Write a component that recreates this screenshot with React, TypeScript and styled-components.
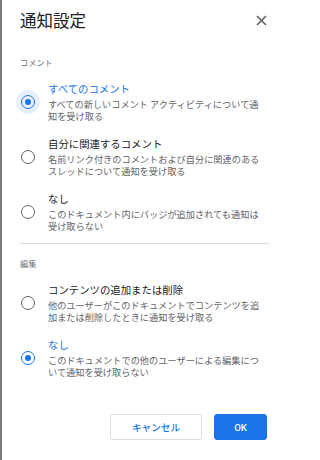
import React, { useState } from "react";
import styled, { createGlobalStyle } from "styled-components";

type OptionType = {
  id: string;
  title: string;
  lines: string[];
};

type SectionType = {
  id: string;
  label: string;
  options: OptionType[];
};

const sections: SectionType[] = [
  {
    id: "comment",
    label: "コメント",
    options: [
      {
        id: "all",
        title: "すべてのコメント",
        lines: ["すべての新しいコメント アクティビティについて通", "知を受け取る"],
      },
      {
        id: "mine",
        title: "自分に関連するコメント",
        lines: ["名前リンク付きのコメントおよび自分に関連のある", "スレッドについて通知を受け取る"],
      },
      {
        id: "none",
        title: "なし",
        lines: ["このドキュメント内にバッジが追加されても通知は", "受け取らない"],
      },
    ],
  },
  {
    id: "edit",
    label: "編集",
    options: [
      {
        id: "changes",
        title: "コンテンツの追加または削除",
        lines: ["他のユーザーがこのドキュメントでコンテンツを追", "加または削除したときに通知を受け取る"],
      },
      {
        id: "none",
        title: "なし",
        lines: ["このドキュメントでの他のユーザーによる編集につ", "いて通知を受け取らない"],
      },
    ],
  },
];

export default function App() {
  // 初期値はスクショ通り
  const [selected, setSelected] = useState<Record<string, string>>({
    comment: "all",
    edit: "none",
  });

  return (
    <>
      <GlobalStyle />
      <Dialog>
        <Header>
          <Title>通知設定</Title>
          <CloseButton aria-label="閉じる">
            <svg width="11" height="11" viewBox="0 0 11 11">
              <path d="M1 1 L10 10 M10 1 L1 10" stroke="#5f6368" strokeWidth="1.6" fill="none" />
            </svg>
          </CloseButton>
        </Header>

        {sections.map((section, sIndex) => (
          <React.Fragment key={section.id}>
            {sIndex > 0 && <Divider />}
            <SectionLabel $first={sIndex === 0}>{section.label}</SectionLabel>
            <OptionList>
              {section.options.map((option) => {
                const checked = selected[section.id] === option.id;
                return (
                  <OptionRow
                    key={option.id}
                    onClick={() => setSelected({ ...selected, [section.id]: option.id })}
                  >
                    <RadioHalo $focused={checked && section.id === "comment"}>
                      <RadioRing $checked={checked} />
                    </RadioHalo>
                    <OptionText>
                      <OptionTitle $checked={checked}>{option.title}</OptionTitle>
                      <OptionDesc>
                        {option.lines.map((line, i) => (
                          <span key={i}>{line}</span>
                        ))}
                      </OptionDesc>
                    </OptionText>
                  </OptionRow>
                );
              })}
            </OptionList>
          </React.Fragment>
        ))}

        <Footer>
          <Button>キャンセル</Button>
          <Button $primary>OK</Button>
        </Footer>
      </Dialog>
    </>
  );
}

const GlobalStyle = createGlobalStyle`
  html, body {
    margin: 0;
    padding: 0;
    background: #ffffff;
  }
  body {
    font-family: Roboto, "Noto Sans CJK JP", sans-serif;
  }
`;

const Dialog = styled.div`
  box-sizing: border-box;
  width: 289px;
  height: 460px;
  padding: 8px 20px 0 18px;
  border-left: 2px solid #7a7a7a;
  background: #ffffff;
  display: flex;
  flex-direction: column;
`;

const Header = styled.div`
  display: flex;
  align-items: center;
  justify-content: space-between;
  height: 24px;
`;

const Title = styled.h1`
  margin: 0;
  font-size: 16.5px;
  line-height: 24px;
  font-weight: 400;
  color: #202124;
  font-family: "Noto Sans CJK JP", sans-serif;
`;

const CloseButton = styled.button`
  width: 16px;
  height: 16px;
  padding: 0;
  border: none;
  background: transparent;
  display: flex;
  align-items: center;
  justify-content: center;
  cursor: pointer;
`;

const SectionLabel = styled.div<{ $first: boolean }>`
  margin-top: ${(p) => (p.$first ? "24px" : "13px")};
  font-size: 8.2px;
  line-height: 12px;
  color: #70757a;
  font-family: "Noto Sans CJK JP", sans-serif;
`;

const OptionList = styled.div`
  display: flex;
  flex-direction: column;
  gap: 15px;
  padding-top: 14px;
`;

const OptionRow = styled.label`
  display: flex;
  align-items: center;
  gap: 8px;
  cursor: pointer;
`;

const RadioHalo = styled.span<{ $focused: boolean }>`
  flex-shrink: 0;
  width: 24px;
  height: 24px;
  margin-left: -4px;
  border-radius: 50%;
  background: ${(p) => (p.$focused ? "#e8f0fe" : "transparent")};
  display: flex;
  align-items: center;
  justify-content: center;
`;

const RadioRing = styled.span<{ $checked: boolean }>`
  box-sizing: border-box;
  width: 14px;
  height: 14px;
  border-radius: 50%;
  border: 1.8px solid ${(p) => (p.$checked ? "#1a73e8" : "#5f6368")};
  display: flex;
  align-items: center;
  justify-content: center;

  &::after {
    content: "";
    width: 6px;
    height: 6px;
    border-radius: 50%;
    background: #1a73e8;
    display: ${(p) => (p.$checked ? "block" : "none")};
  }
`;

const OptionText = styled.div`
  display: flex;
  flex-direction: column;
  font-family: "Noto Sans CJK JP", sans-serif;
`;

const OptionTitle = styled.div<{ $checked: boolean }>`
  font-size: 10.4px;
  line-height: 14px;
  color: ${(p) => (p.$checked ? "#1a73e8" : "#202124")};
`;

const OptionDesc = styled.div`
  margin-top: 3px;
  font-size: 9.2px;
  line-height: 11.5px;
  color: #5f6368;
  white-space: nowrap;

  span {
    display: block;
  }
`;

const Divider = styled.hr`
  margin: 11px 0 0 0;
  border: none;
  height: 1px;
  background: #dadce0;
`;

const Footer = styled.div`
  display: flex;
  justify-content: flex-end;
  gap: 12px;
  margin-top: 36px;
  padding-right: 2px;
`;

const Button = styled.button<{ $primary?: boolean }>`
  box-sizing: border-box;
  height: 26px;
  width: ${(p) => (p.$primary ? "53px" : "92px")};
  border-radius: 3px;
  border: 1px solid ${(p) => (p.$primary ? "#1a73e8" : "#dadce0")};
  background: ${(p) => (p.$primary ? "#1a73e8" : "#ffffff")};
  color: ${(p) => (p.$primary ? "#ffffff" : "#1a73e8")};
  font-family: Roboto, "Noto Sans CJK JP", sans-serif;
  font-size: 9.6px;
  font-weight: 500;
  cursor: pointer;
`;
